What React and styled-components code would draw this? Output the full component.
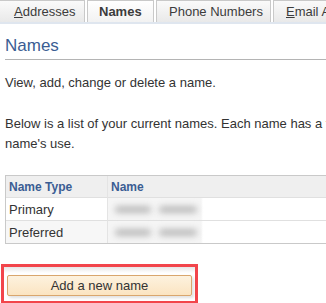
import styled, { createGlobalStyle } from "styled-components";

const GlobalStyle = createGlobalStyle`
  body {
    margin: 0;
    background: #ffffff;
    font-family: Arial, "Liberation Sans", sans-serif;
    overflow: hidden;
  }
`;

const Page = styled.div`
  width: 326px;
  height: 303px;
  overflow: hidden;
`;

const TabBar = styled.div`
  display: flex;
  gap: 2px;
  margin-left: -4px;
  border-bottom: 2px solid #dfe6ef;
  white-space: nowrap;
`;

const Tab = styled.div`
  flex: none;
  width: ${(p) => p.$w}px;
  height: 22px;
  box-sizing: border-box;
  border: 1px solid #c9c9c9;
  border-bottom: none;
  background: ${(p) =>
    p.$active
      ? "linear-gradient(#ffffff, #f2f2f2)"
      : "linear-gradient(#fafafa, #e9e9e9)"};
  color: #3c3c3c;
  font-size: 13px;
  font-weight: ${(p) => (p.$active ? "bold" : "normal")};
  display: flex;
  align-items: center;
  padding-left: ${(p) => p.$pad}px;
  overflow: hidden;
  u {
    text-decoration: underline;
  }
`;

const Body = styled.div`
  padding: 12px 0 0 5px;
`;

const Heading = styled.h2`
  margin: 0;
  font-size: 17px;
  font-weight: normal;
  color: #3b5d93;
  padding-bottom: 4px;
  border-bottom: 1px solid #b4b4b4;
  line-height: 19px;
`;

const Para = styled.p`
  margin: ${(p) => p.$top}px 0 0;
  font-size: 13px;
  line-height: 20px;
  color: #333333;
  white-space: nowrap;
`;

const Grid = styled.div`
  margin-top: 21px;
  display: grid;
  grid-template-columns: 101px 1fr;
  border: 1px solid #c9c9c9;
  border-right: none;
  width: 340px;
`;

const HeadCell = styled.div`
  height: 21px;
  background: #efefef;
  border-left: ${(p) => (p.$first ? "none" : "1px solid #e4e4e4")};
  color: #3b5d93;
  font-size: 12px;
  font-weight: bold;
  display: flex;
  align-items: center;
  padding-left: 3px;
`;

const Cell = styled.div`
  height: 22px;
  border-top: 1px solid #e0e0e0;
  background: ${(p) => (p.$alt ? "#f7f7f7" : "#ffffff")};
  font-size: 13px;
  color: #333333;
  display: flex;
  align-items: center;
  padding-left: 3px;
`;

const NameCell = styled.div`
  height: 22px;
  border-top: 1px solid #e0e0e0;
  border-left: 1px solid #e4e4e4;
  background: linear-gradient(90deg, #f5f5f5 0, #f5f5f5 93px, #ffffff 95px);
  display: flex;
  align-items: center;
  gap: 8px;
  padding-left: 7px;
`;

const Blur = styled.span`
  display: inline-block;
  width: ${(p) => p.$w}px;
  height: 7px;
  border-radius: 4px;
  background: #bcbcbc;
  filter: blur(3px);
`;

const Highlight = styled.div`
  margin: 20px 0 0 -4px;
  width: 197px;
  box-sizing: border-box;
  border: 3px solid #f2454b;
  padding: 8px 0 5px 3px;
  background: linear-gradient(#e6e6e6, #ffffff 6px);
`;

const Button = styled.button`
  width: 185px;
  height: 21px;
  border: 1px solid #d9a66d;
  border-radius: 2px;
  background: linear-gradient(#fdf2df, #fbe4c1);
  color: #333333;
  font-family: Arial, "Liberation Sans", sans-serif;
  font-size: 13px;
  padding: 0;
  box-shadow: 2px 2px 3px rgba(0, 0, 0, 0.12);
`;

const rows = [
  { type: "Primary", alt: false },
  { type: "Preferred", alt: true },
];

export default function App() {
  return (
    <Page>
      <GlobalStyle />
      <TabBar>
        <Tab $w={89} $pad={17}>
          <span>
            <u>A</u>ddresses
          </span>
        </Tab>
        <Tab $w={67} $pad={11} $active>
          Names
        </Tab>
        <Tab $w={115} $pad={12}>
          Phone Numbers
        </Tab>
        <Tab $w={80} $pad={12}>
          <span>
            <u>E</u>mail Addresses
          </span>
        </Tab>
      </TabBar>
      <Body>
        <Heading>Names</Heading>
        <Para $top={13}>View, add, change or delete a name.</Para>
        <Para $top={21}>
          Below is a list of your current names. Each name has a type
          <br />
          name's use.
        </Para>
        <Grid>
          <HeadCell $first>Name Type</HeadCell>
          <HeadCell>Name</HeadCell>
          {rows.map((r) => (
            <>
              <Cell key={r.type} $alt={r.alt}>
                {r.type}
              </Cell>
              <NameCell key={r.type + "n"}>
                <Blur $w={36} />
                <Blur $w={38} />
              </NameCell>
            </>
          ))}
        </Grid>
        <Highlight>
          <Button>Add a new name</Button>
        </Highlight>
      </Body>
    </Page>
  );
}
